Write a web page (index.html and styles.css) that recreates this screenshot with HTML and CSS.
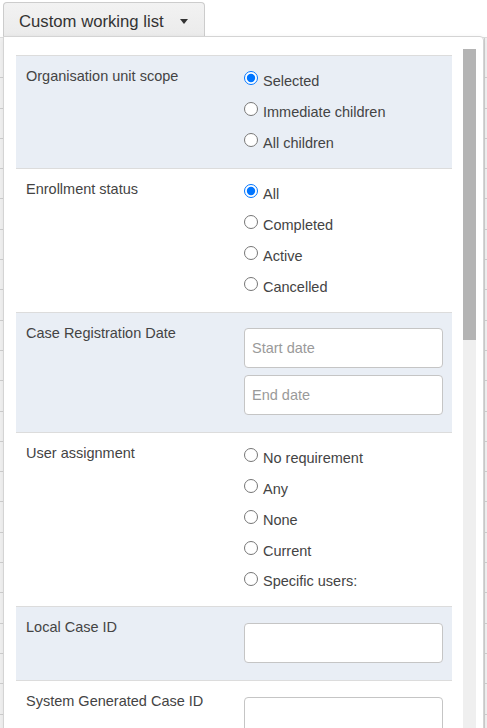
FILE: index.html
```html
<!DOCTYPE html>
<html>
<head>
<meta charset="utf-8">
<link rel="stylesheet" href="styles.css">
</head>
<body>
<div class="page">
  <div class="toolbar">
    <button class="list-btn">Custom working list <span class="caret"></span></button>
  </div>
  <div class="table-bg"></div>
  <div class="panel">
    <div class="panel-content">
      <div class="section shaded">
        <div class="label">Organisation unit scope</div>
        <div class="field">
          <label class="opt"><input type="radio" name="ou" checked><span>Selected</span></label>
          <label class="opt"><input type="radio" name="ou"><span>Immediate children</span></label>
          <label class="opt"><input type="radio" name="ou"><span>All children</span></label>
        </div>
      </div>
      <div class="section">
        <div class="label">Enrollment status</div>
        <div class="field">
          <label class="opt"><input type="radio" name="es" checked><span>All</span></label>
          <label class="opt"><input type="radio" name="es"><span>Completed</span></label>
          <label class="opt"><input type="radio" name="es"><span>Active</span></label>
          <label class="opt"><input type="radio" name="es"><span>Cancelled</span></label>
        </div>
      </div>
      <div class="section shaded">
        <div class="label">Case Registration Date</div>
        <div class="field inputs">
          <input class="text" type="text" placeholder="Start date">
          <input class="text" type="text" placeholder="End date">
        </div>
      </div>
      <div class="section">
        <div class="label">User assignment</div>
        <div class="field">
          <label class="opt"><input type="radio" name="ua"><span>No requirement</span></label>
          <label class="opt"><input type="radio" name="ua"><span>Any</span></label>
          <label class="opt"><input type="radio" name="ua"><span>None</span></label>
          <label class="opt"><input type="radio" name="ua"><span>Current</span></label>
          <label class="opt last"><input type="radio" name="ua"><span>Specific users:</span></label>
        </div>
      </div>
      <div class="section shaded">
        <div class="label">Local Case ID</div>
        <div class="field inputs single">
          <input class="text" type="text">
        </div>
      </div>
      <div class="section">
        <div class="label">System Generated Case ID</div>
        <div class="field inputs single">
          <input class="text" type="text">
        </div>
      </div>
    </div>
    <div class="scrollbar"><div class="thumb"></div></div>
  </div>
</div>
</body>
</html>
```
FILE: styles.css
```css
* { box-sizing: border-box; }
html, body { margin: 0; padding: 0; }
body {
  font-family: "Liberation Sans", Arial, sans-serif;
  color: #444;
  background: #fff;
  overflow: hidden;
}
.page {
  position: relative;
  width: 487px;
  height: 728px;
}
.toolbar {
  height: 37px;
  padding: 2px 0 0 3px;
}
.list-btn {
  height: 35px;
  width: 202px;
  font-family: "Liberation Sans", Arial, sans-serif;
  font-size: 16.7px;
  color: #333;
  background: linear-gradient(#f2f2f2, #ebebeb);
  border: 1px solid #ccc;
  border-bottom: none;
  border-radius: 4px 4px 0 0;
  padding: 4px 0 0 15px;
  text-align: left;
  display: flex;
  align-items: center;
}
.caret {
  display: inline-block;
  width: 0;
  height: 0;
  margin-left: 16px;
  margin-top: -1px;
  border-left: 4.5px solid transparent;
  border-right: 4.5px solid transparent;
  border-top: 5px solid #333;
}
.table-bg {
  height: 691px;
  border-top: 1px solid #ddd;
  background:
    repeating-linear-gradient(to bottom, transparent 0, transparent 29.3px, #cfcfcf 29.3px, #cfcfcf 30.3px) 0 10px / 100% 100%,
    linear-gradient(to right, #f2f2f2 0, #f2f2f2 3px, #cfcfcf 3px, #cfcfcf 4px, #fff 4px, #fff 484px, #cfcfcf 484px, #cfcfcf 485px, #f2f2f2 485px);
}
.panel {
  position: absolute;
  left: 3px;
  top: 36px;
  width: 481px;
  height: 700px;
  background: #fff;
  border: 1px solid #d4d4d4;
  border-radius: 0 4px 0 0;
  box-shadow: 0 2px 6px rgba(0,0,0,0.08);
  display: flex;
  padding: 18px 7px 0 12px;
  gap: 11px;
  overflow: hidden;
}
.panel-content {
  width: 436px;
  flex: none;
}
.scrollbar {
  width: 13px;
  flex: none;
  margin-top: -6px;
  background: #efefef;
  display: flex;
  flex-direction: column;
}
.thumb {
  height: 291px;
  background: #b4b4b4;
}
.section {
  display: flex;
  border-top: 1px solid #dcdcdc;
  padding: 8px 9px 11px 10px;
  background: #fff;
}
.section.shaded { background: #e9eef5; }
.label {
  width: 218px;
  flex: none;
  font-size: 14.5px;
  line-height: 20px;
  padding-top: 2px;
}
.field {
  flex: 1;
  display: flex;
  flex-direction: column;
}
.opt {
  height: 31px;
  display: flex;
  align-items: center;
  font-size: 14.5px;
  color: #444;
}
.opt input {
  width: 14px;
  height: 14px;
  margin: -3px 5px 0 0;
}
.opt span { padding-top: 2px; }
.opt.last { height: 30px; }
.inputs {
  padding: 7px 0 6px;
  gap: 7px;
}
.inputs.single { padding: 8px 0 6px; }
.text {
  height: 40px;
  width: 199px;
  border: 1px solid #c5c5c5;
  border-radius: 4px;
  background: #fff;
  padding: 0 7px;
  font-family: "Liberation Sans", Arial, sans-serif;
  font-size: 14.5px;
  color: #444;
}
.text::placeholder { color: #9a9a9a; }
```
